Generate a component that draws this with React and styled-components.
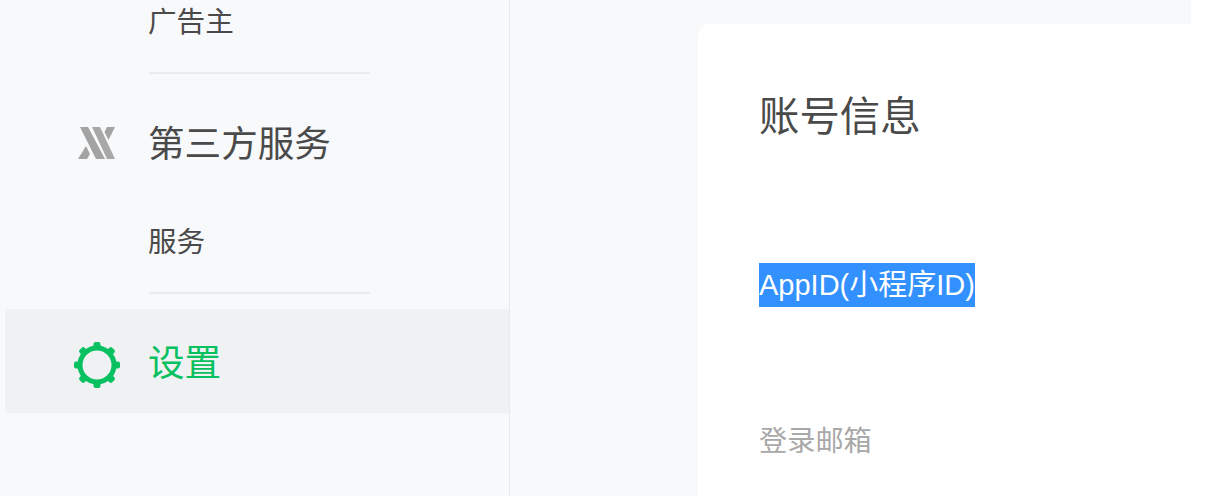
import React from "react";
import styled, { createGlobalStyle } from "styled-components";

const Global = createGlobalStyle`
  html, body { margin: 0; padding: 0; background: #fff; overflow: hidden; }
  * { box-sizing: border-box; }
`;

const Page = styled.div`
  display: flex;
  width: 1191px;
  height: 496px;
  overflow: hidden;
  background: #f8f9fb;
  font-family: "Liberation Sans", "Noto Sans CJK SC", sans-serif;
`;

const Sidebar = styled.aside`
  flex: 0 0 510px;
  height: 496px;
  padding-left: 5px;
  border-right: 1px solid #e9eaec;
  overflow: hidden;
`;

const SubItem = styled.div`
  height: ${(p) => p.$height}px;
  padding: ${(p) => p.$top}px 0 0 143px;
  font-size: 28.6px;
  line-height: 40px;
  color: #4a4a4a;
`;

const Divider = styled.div`
  width: 221px;
  height: 2px;
  margin-left: 144px;
  background: #ebebed;
`;

const GroupRow = styled.div`
  display: flex;
  align-items: center;
  height: ${(p) => p.$height}px;
  margin-top: ${(p) => p.$gap}px;
  background: ${(p) => (p.$active ? "#f0f1f3" : "transparent")};
  color: ${(p) => (p.$active ? "#07c160" : "#4a4a4a")};
  font-size: 36.6px;
`;

const RowLabel = styled.span`
  padding-bottom: ${(p) => p.$lift}px;
`;

const IconSlot = styled.span`
  display: flex;
  justify-content: center;
  flex: 0 0 143px;
  padding-left: 40px;
  padding-top: ${(p) => p.$drop || 0}px;
`;

const Main = styled.main`
  flex: 1;
  padding: 24px 0 0 188px;
`;

const Card = styled.section`
  height: 520px;
  padding: 65px 0 0 61px;
  background: #fff;
  border-radius: 12px 0 0 0;
`;

const Title = styled.h2`
  margin: 0;
  font-size: 40.4px;
  line-height: 56px;
  font-weight: 400;
  color: #4a4a4a;
`;

const FieldLabel = styled.div`
  margin-top: ${(p) => p.$gap}px;
  font-size: ${(p) => p.$size}px;
  line-height: 44px;
  color: ${(p) => (p.$muted ? "#a8a8a8" : "#4a4a4a")};
`;

const Selected = styled.span`
  display: inline-block;
  height: 44px;
  background: #3390ff;
  color: #fff;
`;

const ServiceIcon = () => (
  <svg width="40" height="36" viewBox="0 0 40 36" fill="#a3a3a3">
    <path d="M3 2h8l17 32h-9z" />
    <path d="M15 2h8l15 32h-8z" opacity="0.95" />
    <path d="M30 2h8l-6.5 13-4-8z" />
    <path d="M9 21l4 8-3 5H1z" />
  </svg>
);

const GearIcon = () => (
  <svg width="48" height="48" viewBox="0 0 48 48" fill="#07c160">
    <circle cx="24" cy="24" r="17" fill="none" stroke="#07c160" strokeWidth="5" />
    {[0, 45, 90, 135, 180, 225, 270, 315].map((a) => (
      <rect key={a} x="20.5" y="1" width="7" height="6.5" rx="2" transform={`rotate(${a} 24 24)`} />
    ))}
  </svg>
);

export default function App() {
  return (
    <>
      <Global />
      <Page>
        <Sidebar>
          <SubItem $height={72} $top={2}>广告主</SubItem>
          <Divider />
          <GroupRow $height={70} $gap={34}>
            <IconSlot><ServiceIcon /></IconSlot>
            <RowLabel $lift={4}>第三方服务</RowLabel>
          </GroupRow>
          <SubItem $height={114} $top={44}>服务</SubItem>
          <Divider />
          <GroupRow $height={104} $gap={15} $active>
            <IconSlot $drop={7}><GearIcon /></IconSlot>
            <RowLabel $lift={2}>设置</RowLabel>
          </GroupRow>
        </Sidebar>
        <Main>
          <Card>
            <Title>账号信息</Title>
            <FieldLabel $gap={118} $size={29}><Selected>AppID(小程序ID)</Selected></FieldLabel>
            <FieldLabel $gap={112} $size={28.2} $muted>登录邮箱</FieldLabel>
          </Card>
        </Main>
      </Page>
    </>
  );
}
